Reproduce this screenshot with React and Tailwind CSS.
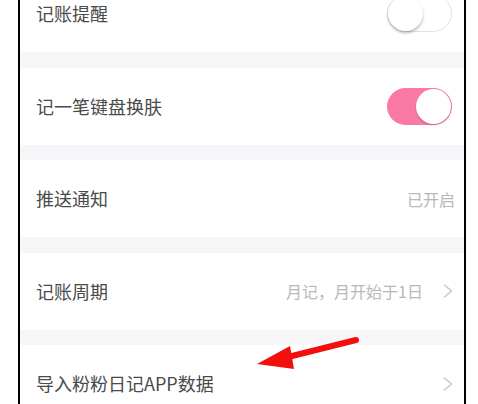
function Toggle({ on }) {
  if (on) {
    return (
      <div className="w-[65px] h-[37px] rounded-full bg-[#fb7aa5] flex items-center justify-end px-[1px]">
        <div className="w-[35px] h-[35px] rounded-full bg-white shadow-[0_1px_2px_rgba(0,0,0,0.25)]" />
      </div>
    );
  }
  return (
    <div className="w-[65px] h-[37px] rounded-full bg-white border border-[#e2e2e2] flex items-center justify-start">
      <div className="w-[35px] h-[35px] rounded-full bg-white shadow-[0_2px_3px_rgba(0,0,0,0.28)]" />
    </div>
  );
}

function Chevron() {
  return (
    <svg width="10" height="16" viewBox="0 0 10 16" className="shrink-0">
      <polyline points="1.5,2 8.5,8 1.5,14" fill="none" stroke="#c6c6c6" strokeWidth="1.5" strokeLinecap="round" strokeLinejoin="round" />
    </svg>
  );
}

function Row({ label, pr = "pr-3", children }) {
  return (
    <div className={`h-[77px] bg-white flex items-center justify-between pl-4 ${pr}`}>
      <span className="text-[18px] text-[#4a4a4a]">{label}</span>
      {children}
    </div>
  );
}

function Gap() {
  return <div className="h-[15.5px] bg-[#f6f6f9]" />;
}

export default function App() {
  return (
    <div
      className="relative w-[478px] h-[404px] bg-white overflow-hidden"
      style={{ fontFamily: '"Noto Sans CJK SC", "Noto Sans", sans-serif' }}
    >
      <div className="ml-[18px] w-[448px] h-full border-x-2 border-black overflow-hidden">
        <div className="-mt-[25px]">
          <Row label="记账提醒">
            <Toggle on={false} />
          </Row>
          <Gap />
          <Row label="记一笔键盘换肤">
            <Toggle on />
          </Row>
          <Gap />
          <Row label="推送通知" pr="pr-[9px]">
            <span className="text-[16px] text-[#b8b8b8]">已开启</span>
          </Row>
          <Gap />
          <Row label="记账周期" pr="pr-[11px]">
            <div className="flex items-center gap-[20px] text-[16px] text-[#b8b8b8]">
              <span>月记，月开始于1日</span>
              <Chevron />
            </div>
          </Row>
          <Gap />
          <Row label="导入粉粉日记APP数据" pr="pr-[11px]">
            <Chevron />
          </Row>
        </div>
      </div>

      {/* red annotation arrow */}
      <svg className="absolute left-0 top-0 pointer-events-none" width="478" height="404">
        <line x1="288" y1="357" x2="356" y2="340" stroke="#f40f0f" strokeWidth="6" strokeLinecap="round" />
        <polygon points="257,364 290,346 294,369" fill="#f40f0f" />
      </svg>
    </div>
  );
}
